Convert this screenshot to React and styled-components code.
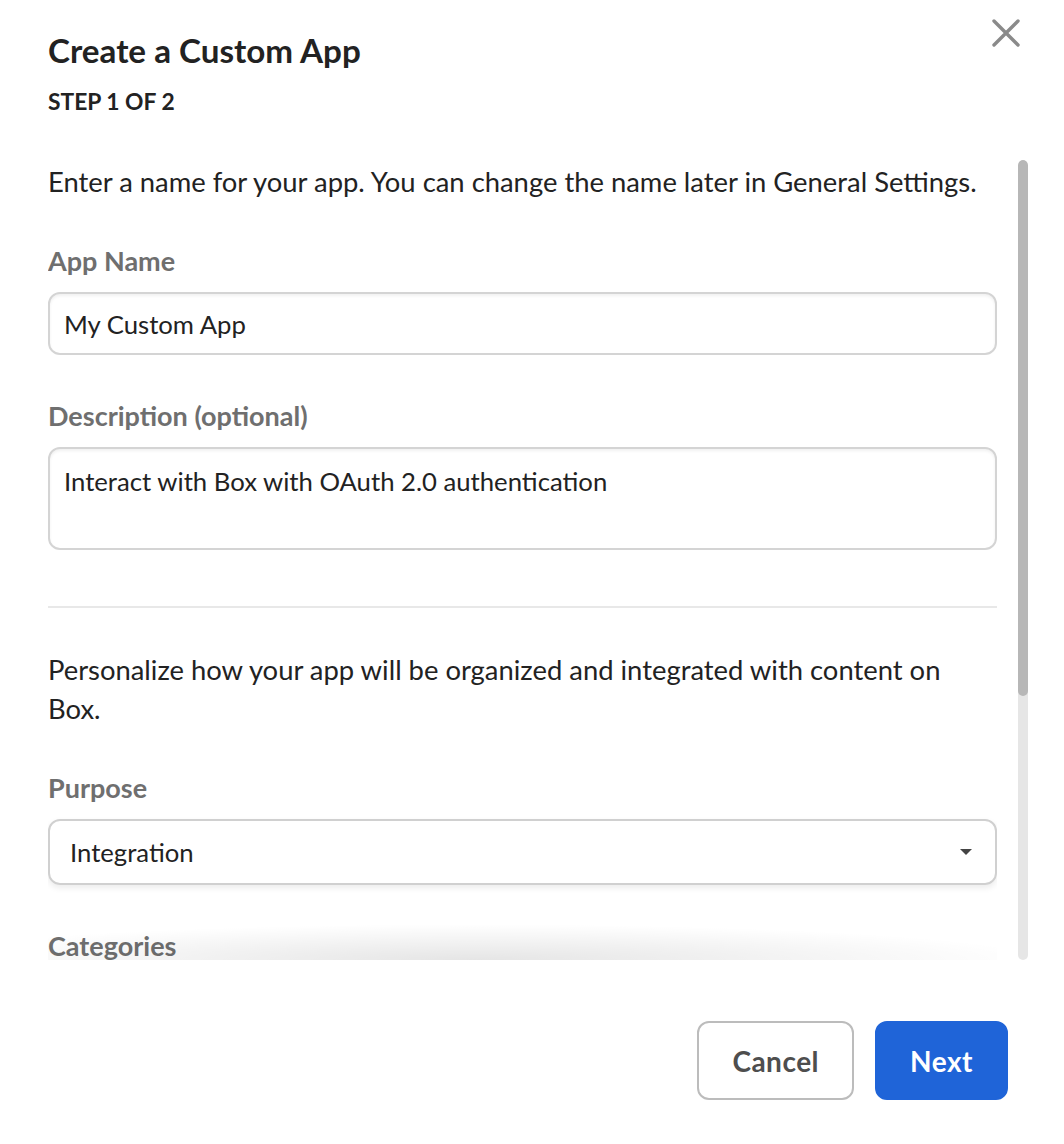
import React from "react";
import styled, { createGlobalStyle } from "styled-components";

const GlobalStyle = createGlobalStyle`
  html, body {
    margin: 0;
    padding: 0;
    background: #ffffff;
  }
  body {
    font-family: Lato, "Open Sans", sans-serif;
    color: #222222;
  }
  * {
    box-sizing: border-box;
  }
`;

const CloseIcon = () => (
  <svg width="28" height="28" viewBox="0 0 28 28" fill="none">
    <path
      d="M2 2 L26 26 M26 2 L2 26"
      stroke="#8a8a8a"
      strokeWidth="3.4"
      strokeLinecap="round"
    />
  </svg>
);

const App = () => {
  return (
    <Modal>
      <GlobalStyle />
      <Header>
        <Title>Create a Custom App</Title>
        <Step>STEP 1 OF 2</Step>
        <CloseButton aria-label="Close">
          <CloseIcon />
        </CloseButton>
      </Header>

      <Body>
        <ScrollArea>
          <Content>
            <Intro>
              Enter a name for your app. You can change the name later in
              General Settings.
            </Intro>

            <Field>
              <Label>App Name</Label>
              <TextInput defaultValue="My Custom App" />
            </Field>

            <Field>
              <Label>Description (optional)</Label>
              <TextArea defaultValue="Interact with Box with OAuth 2.0 authentication" />
            </Field>

            <Divider />

            <Intro>
              Personalize how your app will be organized and integrated with
              content on Box.
            </Intro>

            <Field>
              <Label>Purpose</Label>
              <SelectBox>
                <span>Integration</span>
                <Caret />
              </SelectBox>
            </Field>

            <Field>
              <Label>Categories</Label>
            </Field>
          </Content>
          <Fade />
        </ScrollArea>
        <ScrollTrack>
          <ScrollThumb />
        </ScrollTrack>
      </Body>

      <Footer>
        <Button>Cancel</Button>
        <Button $primary>Next</Button>
      </Footer>
    </Modal>
  );
};

export default App;

const Modal = styled.div`
  width: 1064px;
  height: 1144px;
  display: flex;
  flex-direction: column;
  background: #ffffff;
`;

const Header = styled.div`
  position: relative;
  padding: 30px 48px 0 48px;
  height: 160px;
`;

const Title = styled.h1`
  margin: 0;
  font-size: 33.2px;
  line-height: 40px;
  font-weight: 700;
  color: #222222;
`;

const Step = styled.div`
  margin-top: 17px;
  font-size: 22.8px;
  line-height: 28px;
  font-weight: 700;
  color: #222222;
`;

const CloseButton = styled.button`
  position: absolute;
  top: 19px;
  right: 44px;
  padding: 0;
  border: none;
  background: none;
  display: flex;
`;

const Body = styled.div`
  display: flex;
  height: 800px;
  padding-left: 48px;
`;

const ScrollArea = styled.div`
  position: relative;
  width: 949px;
  height: 100%;
  overflow: hidden;
`;

const Content = styled.div`
  display: flex;
  flex-direction: column;
`;

const Intro = styled.p`
  margin: 2px 0 44px 0;
  font-size: 27.4px;
  line-height: 39px;
  color: #222222;
`;

const Field = styled.div`
  display: flex;
  flex-direction: column;
  margin-bottom: 45px;
`;

const Label = styled.label`
  font-size: 27px;
  line-height: 32px;
  font-weight: 700;
  color: #6f6f6f;
  margin-bottom: 15px;
`;

const TextInput = styled.input`
  width: 100%;
  height: 63px;
  padding: 0 14px;
  border: 2px solid #d4d4d4;
  border-radius: 12px;
  box-shadow: inset 0 2px 3px rgba(0, 0, 0, 0.06);
  font-family: Lato, sans-serif;
  font-size: 25.7px;
  color: #222222;
  outline: none;
`;

const TextArea = styled.textarea`
  width: 100%;
  height: 103px;
  padding: 16px 14px;
  border: 2px solid #d4d4d4;
  border-radius: 12px;
  box-shadow: inset 0 2px 3px rgba(0, 0, 0, 0.06);
  font-family: Lato, sans-serif;
  font-size: 25.7px;
  line-height: 32px;
  color: #222222;
  resize: none;
  outline: none;
`;

const Divider = styled.hr`
  width: 100%;
  margin: 11px 0 40px 0;
  border: none;
  border-top: 2px solid #e8e8e8;
`;

const SelectBox = styled.div`
  height: 66px;
  padding: 0 23px 0 20px;
  display: flex;
  align-items: center;
  justify-content: space-between;
  border: 2px solid #d0d0d0;
  border-radius: 12px;
  box-shadow: 0 3px 6px rgba(0, 0, 0, 0.08);
  font-size: 25.7px;
  color: #222222;
`;

const Caret = styled.span`
  width: 0;
  height: 0;
  border-left: 6px solid transparent;
  border-right: 6px solid transparent;
  border-top: 6px solid #444444;
`;

const Fade = styled.div`
  position: absolute;
  left: 0;
  right: 0;
  bottom: 0;
  height: 36px;
  pointer-events: none;
  background: radial-gradient(
    ellipse 60% 100% at 45% 100%,
    rgba(0, 0, 0, 0.1),
    rgba(0, 0, 0, 0) 100%
  );
`;

const ScrollTrack = styled.div`
  margin-left: 21px;
  width: 10px;
  height: 100%;
  background: #e6e6e6;
  border-radius: 5px;
  overflow: hidden;
`;

const ScrollThumb = styled.div`
  height: 536px;
  background: #b7b7b7;
  border-radius: 5px;
`;

const Footer = styled.div`
  display: flex;
  justify-content: flex-end;
  gap: 21px;
  padding: 61px 56px 0 0;
`;

const Button = styled.button`
  height: 79px;
  padding: 0 33px;
  border-radius: 12px;
  border: 2px solid ${(p) => (p.$primary ? "#1f64d8" : "#bcbcbc")};
  background: ${(p) => (p.$primary ? "#1f64d8" : "#ffffff")};
  color: ${(p) => (p.$primary ? "#ffffff" : "#4e4e4e")};
  font-family: Lato, sans-serif;
  font-size: 28px;
  font-weight: 700;
  letter-spacing: 0.5px;
`;
